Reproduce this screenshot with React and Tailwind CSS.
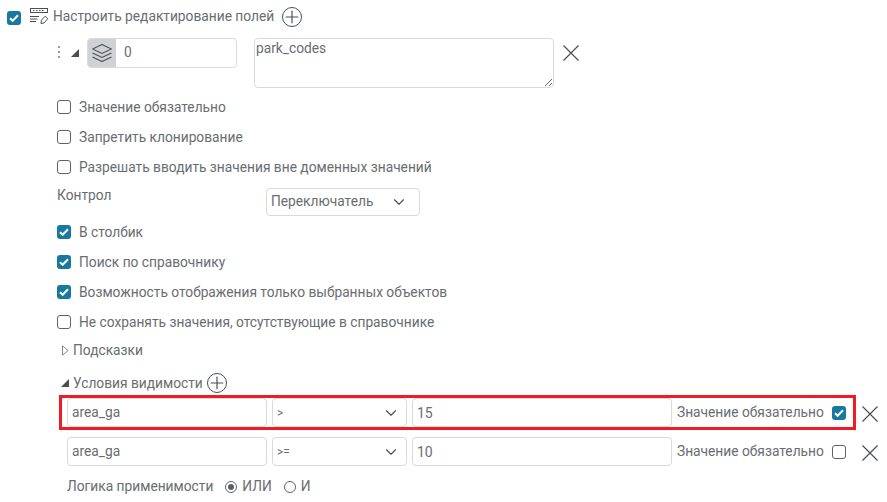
import { ChevronDown, Plus } from 'lucide-react';

function Box({ checked }) {
  if (checked) {
    return (
      <span className="block w-[14px] h-[14px] shrink-0 rounded-[3px] bg-[#17799f] flex items-center justify-center">
        <svg width="10" height="8" viewBox="0 0 10 8" fill="none">
          <path d="M1 4.2 L3.7 6.8 L9 1.2" stroke="white" strokeWidth="2" />
        </svg>
      </span>
    );
  }
  return <span className="block w-[14px] h-[14px] shrink-0 rounded-[3px] border border-[#5f6368] bg-white" />;
}

function CheckRow({ checked, label }) {
  return (
    <div className="h-[30px] flex items-center gap-2 pl-[57px]">
      <Box checked={checked} />
      <span className="pt-[2px]">{label}</span>
    </div>
  );
}

function AddButton() {
  return (
    <span className="w-5 h-5 rounded-full border-[1.5px] border-[#4a4f55] flex items-center justify-center shrink-0">
      <Plus size={20} strokeWidth={1.4} className="text-[#4a4f55] shrink-0" />
    </span>
  );
}

function CloseIcon({ className }) {
  return (
    <svg width="16" height="16" viewBox="0 0 16 16" fill="none" stroke="#4a4f55" strokeWidth="1.2" className={className}>
      <path d="M0.5 0.5 L15.5 15.5 M15.5 0.5 L0.5 15.5" />
    </svg>
  );
}

function Triangle({ open }) {
  if (open) {
    return (
      <svg width="8" height="8" viewBox="0 0 8 8" className="shrink-0">
        <path d="M0 8 L8 8 L8 0 Z" fill="#4a4f55" />
      </svg>
    );
  }
  return (
    <svg width="7" height="11" viewBox="0 0 7 11" className="shrink-0">
      <path d="M0.5 0.8 L6 5.5 L0.5 10.2 Z" fill="none" stroke="#888" />
    </svg>
  );
}

function ConditionRow({ op, value, checked, outlined }) {
  return (
    <div className={outlined ? 'ml-[59px] w-[797px] h-[35px] border-[3px] border-[#ee1c25] flex items-center pl-[5px] relative' : 'ml-[59px] w-[797px] h-[35px] border-[3px] border-transparent flex items-center pl-[5px] relative'}>
      <div className="w-[200px] h-[29px] border border-[#d9d9d9] rounded-[4px] px-[4px] flex items-center shrink-0">area_ga</div>
      <div className="w-[135px] h-[29px] ml-[5px] border border-[#d9d9d9] rounded-[4px] px-[4px] flex items-center justify-between shrink-0">
        <span className="text-[12px]">{op}</span>
        <ChevronDown size={18} strokeWidth={1.5} className="mr-[2px] text-[#4a4f55]" />
      </div>
      <div className="w-[260px] h-[29px] ml-[5px] border border-[#d9d9d9] rounded-[4px] px-[4px] flex items-center text-[14px] shrink-0">{value}</div>
      <span className="ml-[5px] whitespace-nowrap">Значение обязательно</span>
      <span className="ml-[8px] flex"><Box checked={checked} /></span>
      <CloseIcon className="absolute left-[800px] top-[8px]" />
    </div>
  );
}

export default function App() {
  return (
    <div className="w-[887px] h-[502px] overflow-hidden bg-white text-[13.75px] leading-none text-[#696d71]" style={{ fontFamily: 'Roboto, sans-serif' }}>
      <div className="h-[38px] flex items-start pt-[7px] pl-[7px]">
        <span className="mt-[4px] flex"><Box checked /></span>
        {/* иконка редактирования полей */}
        <svg width="18" height="16" viewBox="0 0 18 16" fill="none" stroke="#4a4f55" strokeWidth="1" className="ml-[9px] mt-[1px] shrink-0">
          <rect x="0.5" y="0.5" width="17" height="4" />
          <path d="M3 2.5h1.5M6 2.5h1.5M9 2.5h1.5M12 2.5h1.5" />
          <path d="M0 8.5h9M0 11h7.5M0 13.5h6" />
          <path d="M11 15.5 L11.4 12.2 L15.2 8.2 L17.8 10.6 L14 15 Z" />
        </svg>
        <span className="ml-[5px] mt-[3px]">Настроить редактирование полей</span>
        <span className="ml-[8px]"><AddButton /></span>
      </div>

      <div className="h-[54px] flex items-start">
        <span className="ml-[58px] mt-[8px] flex flex-col gap-[3px]">
          <span className="w-[2px] h-[2px] bg-[#999]" />
          <span className="w-[2px] h-[2px] bg-[#999]" />
          <span className="w-[2px] h-[2px] bg-[#999]" />
        </span>
        <span className="ml-[11px] mt-[11px] flex"><Triangle open /></span>
        <div className="ml-[8px] w-[150px] h-[30px] rounded-[4px] border border-[#d9d9d9] flex overflow-hidden">
          <span className="w-[28px] bg-[#cfd1d4] flex items-center justify-center">
            <svg width="20" height="18" viewBox="0 0 20 18" fill="none" stroke="#4a4f55" strokeWidth="1.1">
              <path d="M10 0.5 L19.5 5 L10 9.5 L0.5 5 Z" />
              <path d="M0.5 9 L10 13.5 L19.5 9" />
              <path d="M0.5 13 L10 17.5 L19.5 13" />
            </svg>
          </span>
          <span className="pl-2 flex items-center">0</span>
        </div>
        <textarea
          readOnly
          value="park_codes"
          className="ml-[17px] w-[300px] h-[50px] border border-[#d9d9d9] rounded-[4px] px-[1px] py-[1px] text-[13.75px] leading-[16px] text-[#696d71] outline-none"
        />
        <CloseIcon className="ml-[9px] mt-[7px]" />
      </div>

      <CheckRow label="Значение обязательно" />
      <CheckRow label="Запретить клонирование" />
      <CheckRow label="Разрешать вводить значения вне доменных значений" />

      <div className="h-[28px] mt-[6px] flex items-center pl-[57px]">
        <span className="w-[209px] -mt-[12px]">Контрол</span>
        <div className="w-[154px] h-[28px] border border-[#d9d9d9] rounded-[4px] pl-[4px] pr-[11px] flex items-center justify-between">
          <span>Переключатель</span>
          <ChevronDown size={18} strokeWidth={1.5} className="text-[#4a4f55]" />
        </div>
      </div>

      <div className="mt-[1px]">
        <CheckRow checked label="В столбик" />
        <CheckRow checked label="Поиск по справочнику" />
        <CheckRow checked label="Возможность отображения только выбранных объектов" />
        <CheckRow label="Не сохранять значения, отсутствующие в справочнике" />
      </div>

      <div className="h-[26px] flex items-center pl-[62px] gap-[4px]">
        <Triangle />
        <span className="pt-[2px]">Подсказки</span>
      </div>

      <div className="h-[24px] mt-[8px] flex items-center pl-[61px] gap-[4px]">
        <Triangle open />
        <span className="pt-[2px]">Условия видимости</span>
        <AddButton />
      </div>

      <ConditionRow op=">" value="15" checked outlined />
      <div className="mt-[4px]">
        <ConditionRow op=">=" value="10" />
      </div>

      <div className="ml-[67px] mt-[11px] flex items-center">
        <span>Логика применимости</span>
        <span className="ml-[12px] w-3 h-3 rounded-full border border-[#5f6368] flex items-center justify-center">
          <span className="w-[6px] h-[6px] rounded-full bg-[#5a5f64]" />
        </span>
        <span className="ml-[5px]">ИЛИ</span>
        <span className="ml-[12px] w-3 h-3 rounded-full border border-[#5f6368]" />
        <span className="ml-[5px]">И</span>
      </div>
    </div>
  );
}
